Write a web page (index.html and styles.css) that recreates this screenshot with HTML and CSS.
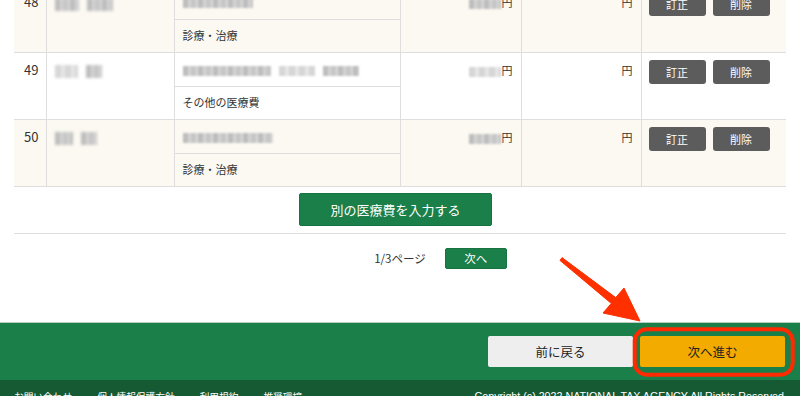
FILE: index.html
```html
<!DOCTYPE html>
<html lang="ja">
<head>
    <meta charset="UTF-8">
    <meta name="viewport" content="width=device-width, initial-scale=1.0">
    <title>医療費の入力</title>
    <link rel="stylesheet" href="styles.css">
</head>
<body>
    <main class="content">
        <table class="expense-table">
            <colgroup>
                <col class="col-num">
                <col class="col-name">
                <col class="col-detail">
                <col class="col-amount">
                <col class="col-amount2">
                <col class="col-action">
            </colgroup>

            <tbody class="entry alt">
                <tr>
                    <td class="num" rowspan="2">48</td>
                    <td class="name" rowspan="2"><span class="mask w24"></span><span class="mask w26"></span></td>
                    <td class="detail"><span class="mask w70"></span></td>
                    <td class="amount" rowspan="2"><span class="mask w32"></span>円</td>
                    <td class="amount" rowspan="2">円</td>
                    <td class="action" rowspan="2"><button class="btn-small">訂正</button><button class="btn-small">削除</button></td>
                </tr>
                <tr>
                    <td class="detail sub">診療・治療</td>
                </tr>
            </tbody>

            <tbody class="entry">
                <tr>
                    <td class="num" rowspan="2">49</td>
                    <td class="name" rowspan="2"><span class="mask light w23"></span><span class="mask w16"></span></td>
                    <td class="detail"><span class="mask w88"></span><span class="mask light w36"></span><span class="mask w36"></span></td>
                    <td class="amount" rowspan="2"><span class="mask light w32"></span>円</td>
                    <td class="amount" rowspan="2">円</td>
                    <td class="action" rowspan="2"><button class="btn-small">訂正</button><button class="btn-small">削除</button></td>
                </tr>
                <tr>
                    <td class="detail sub">その他の医療費</td>
                </tr>
            </tbody>

            <tbody class="entry alt">
                <tr>
                    <td class="num" rowspan="2">50</td>
                    <td class="name" rowspan="2"><span class="mask w18"></span><span class="mask w16"></span></td>
                    <td class="detail"><span class="mask w90"></span></td>
                    <td class="amount" rowspan="2"><span class="mask w32"></span>円</td>
                    <td class="amount" rowspan="2">円</td>
                    <td class="action" rowspan="2"><button class="btn-small">訂正</button><button class="btn-small">削除</button></td>
                </tr>
                <tr>
                    <td class="detail sub">診療・治療</td>
                </tr>
            </tbody>
        </table>

        <div class="add-row">
            <button class="btn-add">別の医療費を入力する</button>
        </div>

        <div class="pager">
            <span class="pager-count">1/3ページ</span>
            <button class="btn-page">次へ</button>
        </div>
    </main>

    <div class="step-bar">
        <button class="btn-back">前に戻る</button>
        <button class="btn-next">次へ進む</button>
    </div>

    <footer class="site-footer">
        <ul class="footer-links">
            <li>お問い合わせ</li>
            <li>個人情報保護方針</li>
            <li>利用規約</li>
            <li>推奨環境</li>
        </ul>
        <p class="copyright">Copyright (c) 2022 NATIONAL TAX AGENCY All Rights Reserved</p>
    </footer>

    <!-- annotation drawn over the screenshot -->
    <svg class="annotation" width="800" height="396" viewBox="0 0 800 396">
        <polygon class="arrow" points="562,257.6 615.7,297.6 624,288 640,321 603,313 611.3,303.4 560,260.4"/>
        <rect class="highlight" x="634.7" y="329.3" width="158" height="45.4" rx="12" ry="12"/>
    </svg>
</body>
</html>
```

FILE: styles.css
```css
* {
    box-sizing: border-box;
}
html {
    overflow: hidden;
}
body {
    margin: 0;
    position: relative;
    font-family: "Noto Sans CJK JP", "Noto Sans", sans-serif;
    font-size: 11px;
    color: #333;
    background: #fff;
}
button {
    font-family: inherit;
    cursor: pointer;
}
.content {
    padding: 0 14px;
}

/* table */
.expense-table {
    width: 100%;
    table-layout: fixed;
    border-collapse: collapse;
    margin-top: -15px;
}
.col-num { width: 32px; }
.col-name { width: 128px; }
.col-detail { width: 226px; }
.col-amount { width: 121px; }
.col-amount2 { width: 120px; }
.col-action { width: 145px; }

.entry td {
    border-bottom: 1px solid #dedede;
    border-left: 1px solid #dedede;
    vertical-align: top;
    line-height: 17px;
}
.entry td.num {
    border-left: 0;
}
.entry.alt {
    background: #fcf9f2;
}
.num {
    font-size: 13px;
    text-align: center;
    padding: 8px 0 0 3px;
}
.name {
    padding: 9px 8px 0;
}
.detail {
    height: 34px;
    padding: 0 8px;
    vertical-align: middle !important;
    white-space: nowrap;
}
.detail.sub {
    height: 33px;
}
.amount {
    text-align: right;
    padding: 9px 8px 0;
    white-space: nowrap;
}
.action {
    padding: 7px 0 0 7px;
    white-space: nowrap;
}
.btn-small {
    width: 57px;
    height: 24px;
    margin-right: 7px;
    border: 0;
    border-radius: 3px;
    background: #5c5c5c;
    color: #fff;
    font-size: 11px;
    vertical-align: top;
}

/* blurred personal data */
.mask {
    display: inline-block;
    height: 10px;
    margin-right: 8px;
    vertical-align: middle;
    background: repeating-linear-gradient(90deg, #bdbdbd 0 5px, #d4d4d4 5px 8px, #c6c6c6 8px 13px, #dadada 13px 15px);
    filter: blur(1.2px);
}
.mask.light {
    background: repeating-linear-gradient(90deg, #d6d6d6 0 6px, #e6e6e6 6px 10px);
}
.name .mask {
    height: 13px;
    filter: blur(1.6px);
}
.amount .mask {
    margin-right: 1px;
}
.w16 { width: 16px; }
.w18 { width: 18px; }
.w23 { width: 23px; }
.w24 { width: 24px; }
.w26 { width: 26px; }
.w32 { width: 32px; }
.w36 { width: 36px; }
.w70 { width: 70px; }
.w88 { width: 88px; }
.w90 { width: 90px; }

/* add button */
.add-row {
    display: flex;
    justify-content: center;
    padding: 6px 9px 7px 0;
    border-bottom: 1px solid #dedede;
}
.btn-add {
    width: 193px;
    height: 33px;
    border: 1px solid #17733f;
    border-radius: 2px;
    background: #1b7f4a;
    color: #fff;
    font-size: 13px;
}

/* pager */
.pager {
    display: grid;
    grid-template-columns: 1fr auto 1fr;
    align-items: center;
    align-content: start;
    height: 88px;
    padding: 14px 0 0;
}
.pager-count {
    grid-column: 2;
    font-size: 11.5px;
}
.btn-page {
    grid-column: 3;
    justify-self: start;
    width: 62px;
    height: 21px;
    margin-left: 19px;
    border: 1px solid #17733f;
    border-radius: 2px;
    background: #1b7f4a;
    color: #fff;
    font-size: 11.5px;
}

/* step navigation */
.step-bar {
    display: flex;
    justify-content: flex-end;
    gap: 7px;
    padding: 13px 15px 13px 0;
    background: #1b7f4a;
    border-top: 1px solid #b8cdbf;
}
.step-bar button {
    width: 145px;
    height: 31px;
    border: 0;
    border-radius: 2px;
    font-size: 12.5px;
    color: #222;
}
.btn-back {
    background: #eeeeee;
}
.btn-next {
    background: #f3ab00;
}

/* footer */
.site-footer {
    display: flex;
    justify-content: space-between;
    align-items: flex-start;
    height: 40px;
    padding: 10px 16px 0 14px;
    background: #155a33;
    color: #fff;
}
.footer-links {
    display: flex;
    gap: 25px;
    margin: 0;
    padding: 0;
    list-style: none;
    font-size: 9.7px;
}
.copyright {
    margin: 0;
    font-family: "Liberation Sans", Arial, sans-serif;
    font-size: 10.7px;
}

/* annotation */
.annotation {
    position: absolute;
    top: 0;
    left: 0;
    pointer-events: none;
}
.arrow {
    fill: #ff3000;
    stroke: #ff3000;
    stroke-width: 1;
    stroke-linejoin: round;
}
.highlight {
    fill: none;
    stroke: #ff2a00;
    stroke-width: 4;
}
```
